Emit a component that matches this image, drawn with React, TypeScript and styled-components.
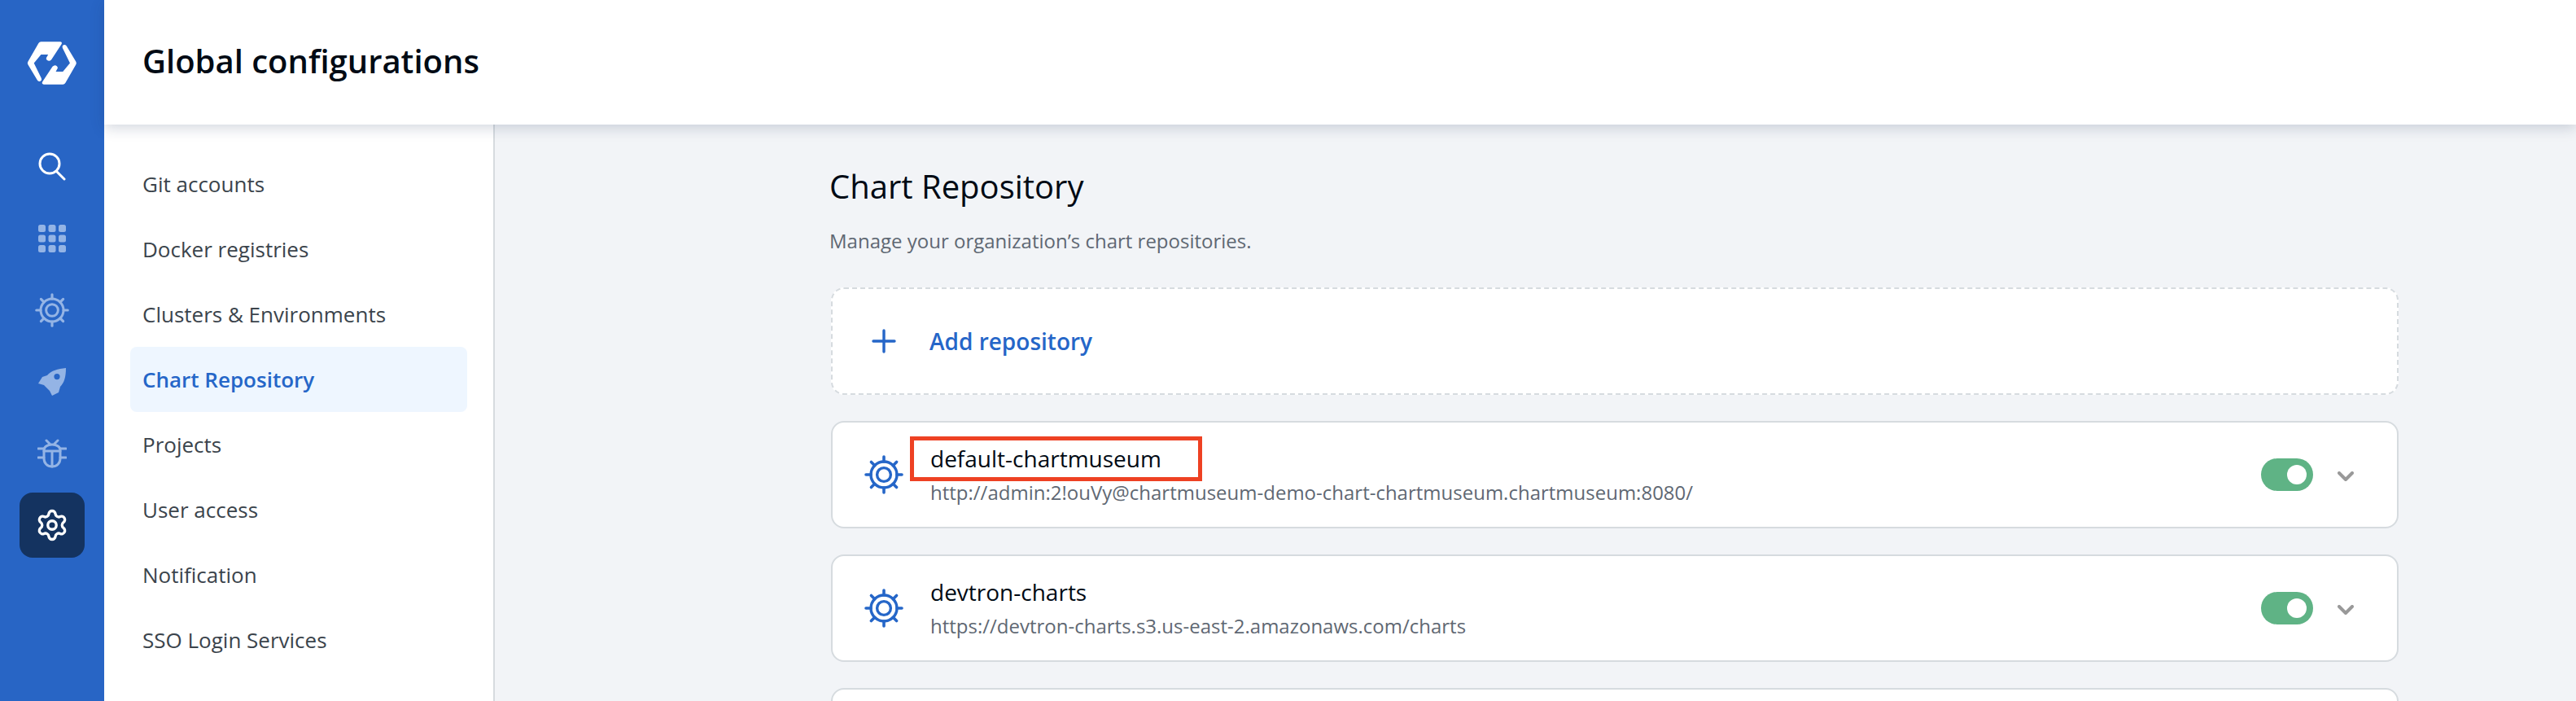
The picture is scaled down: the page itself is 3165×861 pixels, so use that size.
import React from "react";
import styled, { createGlobalStyle } from "styled-components";
import { Settings } from "lucide-react";

const GlobalStyle = createGlobalStyle`
	html, body {
		margin: 0;
		padding: 0;
		height: 861px;
		overflow: hidden;
		background: #f2f4f7;
		font-family: "Open Sans", "Liberation Sans", sans-serif;
	}
	* {
		box-sizing: border-box;
	}
`;

const SPage = styled.div`
	display: flex;
	width: 3165px;
	height: 861px;
	overflow: hidden;
`;

const SRail = styled.nav`
	flex: 0 0 128px;
	background: #2865c5;
	display: flex;
	flex-direction: column;
	align-items: center;
	gap: 8px;
	padding-top: 165px;
	position: relative;
`;

const SLogo = styled.svg`
	position: absolute;
	left: 33px;
	top: 50px;
`;

const SRailItem = styled.div<{ $active?: boolean; $dim?: boolean }>`
	width: 80px;
	height: 80px;
	border-radius: 16px;
	display: flex;
	align-items: center;
	justify-content: center;
	background: ${(p) => (p.$active ? "#143360" : "transparent")};
	color: ${(p) => (p.$dim ? "#94b4e5" : "#fff")};
`;

const SBody = styled.div`
	flex: 1;
	display: flex;
	flex-direction: column;
	min-width: 0;
`;

const SHeader = styled.header`
	height: 153px;
	flex: 0 0 153px;
	background: #fff;
	display: flex;
	align-items: center;
	padding: 0 0 4px 47px;
	box-shadow: 0 4px 16px rgba(30, 50, 90, 0.2);
	position: relative;
	z-index: 2;
	h1 {
		margin: 0;
		font-size: 40px;
		font-weight: 600;
		color: #000a14;
	}
`;

const SColumns = styled.div`
	flex: 1;
	display: flex;
	min-height: 0;
`;

const SSideNav = styled.aside`
	flex: 0 0 480px;
	background: #fff;
	border-right: 2px solid #d6dbdf;
	padding: 33px 32px 0;
	display: flex;
	flex-direction: column;
`;

const SNavItem = styled.div<{ $active?: boolean }>`
	height: 80px;
	flex: 0 0 80px;
	display: flex;
	align-items: center;
	padding-left: 15px;
	border-radius: 8px;
	font-size: 26px;
	font-weight: ${(p) => (p.$active ? 600 : 400)};
	color: ${(p) => (p.$active ? "#2566c8" : "#3b444c")};
	background: ${(p) => (p.$active ? "#eef6ff" : "transparent")};
`;

const SMain = styled.main`
	flex: 1;
	padding: 46px 218px 0 411px;
	background: #f2f4f7;
`;

const STitle = styled.h2`
	margin: 0;
	font-size: 40px;
	line-height: 60px;
	font-weight: 400;
	color: #000a14;
`;

const SSubtitle = styled.p`
	margin: 19px 0 0;
	font-size: 24px;
	line-height: 36px;
	color: #5f6873;
`;

const SAddCard = styled.div`
	margin: 39px 0 0 2px;
	height: 132px;
	border: 2px dashed #d6dbdf;
	border-radius: 16px;
	background: #fff;
	display: flex;
	align-items: center;
	padding-left: 48px;
	gap: 41px;
	font-size: 28px;
	font-weight: 600;
	color: #2566c8;
`;

const SRepoCard = styled.div`
	margin: 32px 0 0 2px;
	height: 132px;
	border: 2px solid #d6dbdf;
	border-radius: 16px;
	background: #fff;
	display: flex;
	align-items: center;
	padding: 0 53px 0 39px;
	position: relative;
`;

const SWheelSlot = styled.div`
	flex: 0 0 48px;
	display: flex;
`;

const SRepoText = styled.div`
	margin: -2px 0 0 33px;
	flex: 1;
`;

const SRepoName = styled.div`
	font-size: 28px;
	line-height: 42px;
	color: #000a14;
`;

const SRepoUrl = styled.div`
	margin-top: 3px;
	font-size: 24px;
	line-height: 36px;
	color: #5f6873;
`;

const SHighlight = styled.div`
	position: absolute;
	left: 95px;
	top: 17px;
	width: 359px;
	height: 55px;
	border: 5px solid #ee4123;
`;

const SToggle = styled.div`
	width: 64px;
	height: 40px;
	border-radius: 20px;
	background: #5fb385;
	display: flex;
	align-items: center;
	justify-content: flex-end;
	padding-right: 8px;
	&::after {
		content: "";
		width: 24px;
		height: 24px;
		border-radius: 50%;
		background: #fff;
	}
`;

const SChevron = styled.svg`
	margin: 4px 0 0 30px;
`;

function WheelIcon({ size, color }: { size: number; color: string }) {
	const spokes = [0, 45, 90, 135, 180, 225, 270, 315];
	return (
		<svg width={size} height={size} viewBox="0 0 48 48" fill="none" stroke={color}>
			<circle cx="24" cy="24" r="16" strokeWidth="3.4" />
			<circle cx="24" cy="24" r="8.4" strokeWidth="3.4" />
			{spokes.map((a) => (
				<line key={a} x1="24" y1="8" x2="24" y2="2" strokeWidth="3.6" strokeLinecap="round" transform={`rotate(${a} 24 24)`} />
			))}
		</svg>
	);
}

function GridIcon() {
	const cells = [0, 1, 2, 3, 4, 5, 6, 7, 8];
	return (
		<svg width="34" height="34" viewBox="0 0 34 34" fill="currentColor">
			{cells.map((i) => (
				<rect key={i} x={(i % 3) * 12.5} y={Math.floor(i / 3) * 12.5} width="9" height="9" rx="2.5" />
			))}
		</svg>
	);
}

const Repo = ({ name, url, marked }: { name: string; url: string; marked?: boolean }) => (
	<SRepoCard>
		<SWheelSlot>
			<WheelIcon size={48} color="#2566c8" />
		</SWheelSlot>
		<SRepoText>
			<SRepoName>{name}</SRepoName>
			<SRepoUrl>{url}</SRepoUrl>
		</SRepoText>
		{marked && <SHighlight />}
		<SToggle />
		<SChevron width="20" height="13" viewBox="0 0 20 13" fill="none" stroke="#999" strokeWidth="4" strokeLinecap="round" strokeLinejoin="round">
			<path d="M2 2l8 8 8-8" />
		</SChevron>
	</SRepoCard>
);

const navItems = [
	"Git accounts",
	"Docker registries",
	"Clusters & Environments",
	"Chart Repository",
	"Projects",
	"User access",
	"Notification",
	"SSO Login Services",
];

const logoHalf = "M152 65L222 65Q231 66 227 74L190 130Q182 138 174 132Q168 127 174 119L178 112L152 112L126 143L153 198Q156 208 147 210Q141 211 138 205L104 148Q101 143 104 138L143 70Q146 65 152 65Z";

export default function App() {
	return (
		<>
			<GlobalStyle />
			<SPage>
				<SRail>
					<SLogo width="62" height="56" viewBox="100 62 185 165" fill="#fff">
						<path d={logoHalf} />
						<path d={logoHalf} transform="rotate(180 192 143)" />
					</SLogo>
					<SRailItem>
						<svg width="34" height="36" viewBox="0 0 34 36" fill="none" stroke="currentColor" strokeWidth="3" strokeLinecap="round">
							<circle cx="14" cy="14" r="12" />
							<path d="M23 24l9 9" />
						</svg>
					</SRailItem>
					<SRailItem $dim>
						<GridIcon />
					</SRailItem>
					<SRailItem $dim>
						<WheelIcon size={42} color="#94b4e5" />
					</SRailItem>
					<SRailItem $dim>
						<svg width="36" height="36" viewBox="0 0 36 36" fill="currentColor">
							<path fillRule="evenodd" d="M35 1C35 12 33 19 28 24L26 31L18 35L15 29L8 22L1 20L6 12L12 10C17 4 25 2 35 1ZM24 8A3.6 3.6 0 1 0 24 15.2A3.6 3.6 0 1 0 24 8Z" />
						</svg>
					</SRailItem>
					<SRailItem $dim>
						<svg width="36" height="36" viewBox="0 0 36 36" fill="none" stroke="currentColor" strokeWidth="3" strokeLinecap="round">
							<path d="M8 14C8 10 12 7 18 7C24 7 28 10 28 14V24C28 30 24 34 18 34C12 34 8 30 8 24Z" />
							<path d="M8 15H28M18 15V34M1 12H8M35 12H28M1 23H8M35 23H28M11 2L15 6M25 2L21 6" />
						</svg>
					</SRailItem>
					<SRailItem $active>
						<Settings size={42} strokeWidth={1.9} />
					</SRailItem>
				</SRail>
				<SBody>
					<SHeader>
						<h1>Global configurations</h1>
					</SHeader>
					<SColumns>
						<SSideNav>
							{navItems.map((item) => (
								<SNavItem key={item} $active={item === "Chart Repository"}>
									{item}
								</SNavItem>
							))}
						</SSideNav>
						<SMain>
							<STitle>Chart Repository</STitle>
							<SSubtitle>Manage your organization’s chart repositories.</SSubtitle>
							<SAddCard>
								<svg width="30" height="30" viewBox="0 0 30 30" stroke="#2566c8" strokeWidth="3.4" strokeLinecap="round">
									<path d="M15 2V28M2 15H28" />
								</svg>
								Add repository
							</SAddCard>
							<Repo marked name="default-chartmuseum" url="http://admin:2!ouVy@chartmuseum-demo-chart-chartmuseum.chartmuseum:8080/" />
							<Repo name="devtron-charts" url="https://devtron-charts.s3.us-east-2.amazonaws.com/charts" />
							<SRepoCard />
						</SMain>
					</SColumns>
				</SBody>
			</SPage>
		</>
	);
}
